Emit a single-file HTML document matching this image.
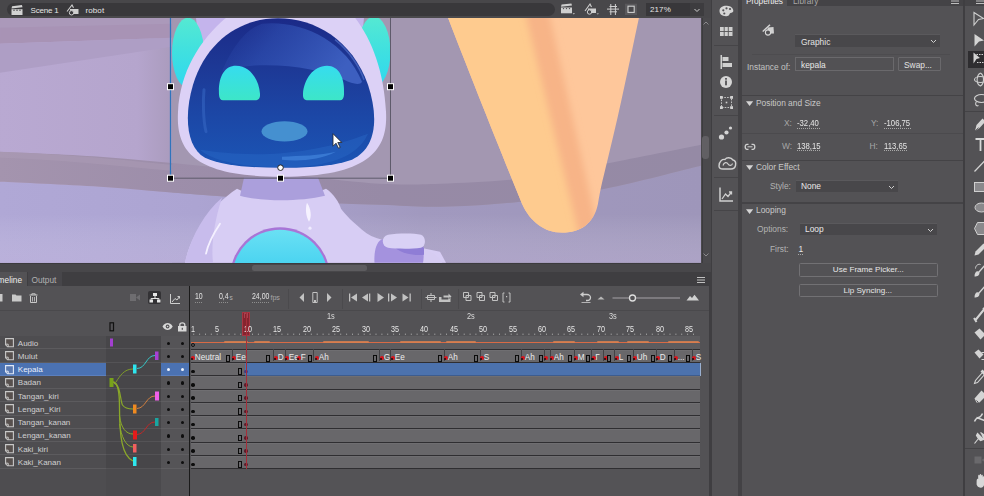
<!DOCTYPE html>
<html><head><meta charset="utf-8">
<style>
*{margin:0;padding:0;box-sizing:border-box}
html,body{width:984px;height:496px;overflow:hidden;background:#535255;font-family:"Liberation Sans",sans-serif;color:#d8d8d8}
.a{position:absolute}
.t{position:absolute;white-space:nowrap;font-size:8px;line-height:10px}
.n{transform-origin:0 0;display:inline-block}
svg{position:absolute;overflow:visible}
</style></head><body>
<div class="a" style="left:0px;top:0px;width:711px;height:18px;background:#48474a;"></div><div class="a" style="left:0px;top:16px;width:701px;height:2.3px;background:#4a494c;"></div><div class="a" style="left:7px;top:3px;width:548px;height:13px;background:#39383b;border-radius:6.5px"></div><svg style="left:11px;top:5px" width="13" height="11"><path d="M0.5 4.2 H11.5 V10 H0.5 Z" fill="#d2d2d2"/><path d="M0.5 3.5 L1.1 1.3 L10.9 0.1 L11.5 2.3 Z" fill="#d2d2d2"/><circle cx="3" cy="5.3" r="0.7" fill="#39383b"/><circle cx="6" cy="5.3" r="0.7" fill="#39383b"/><circle cx="9" cy="5.3" r="0.7" fill="#39383b"/></svg><div class="t" style="left:30.5px;top:5.53px;font-size:8px;color:#e6e6e6;letter-spacing:-0.2px">Scene 1</div><svg style="left:66px;top:4px" width="14" height="12"><path d="M1 7.5 L6 1 L7.5 3.8" fill="none" stroke="#cfcfcf" stroke-width="1.1"/><path d="M4 5 H12.5 V10 H4 Z" fill="#cfcfcf"/><circle cx="5.5" cy="8.8" r="2.2" fill="#39383b" stroke="#cfcfcf" stroke-width="1"/></svg><div class="t" style="left:85.5px;top:5.53px;font-size:8px;color:#e6e6e6;letter-spacing:0.1px">robot</div><svg style="left:555px;top:0px" width="90" height="18"><path d="M6 7.5 H17 V13.3 H6 Z" fill="#cfcfcf"/><path d="M6 6.8 L6.6 4.6 L16.4 3.4 L17 5.6 Z" fill="#cfcfcf"/><circle cx="8.5" cy="8.6" r="0.7" fill="#48474a"/><circle cx="11.5" cy="8.6" r="0.7" fill="#48474a"/><circle cx="14.5" cy="8.6" r="0.7" fill="#48474a"/><path d="M17.6 13.2 H20 L18.8 14.4 Z" fill="#cfcfcf"/><path d="M30 11 L35 4 L36.5 7" fill="none" stroke="#cfcfcf" stroke-width="1.1"/><path d="M33 8.5 H41 V13 H33 Z" fill="#cfcfcf"/><circle cx="34.5" cy="12" r="2.2" fill="#48474a" stroke="#cfcfcf" stroke-width="1"/><path d="M41.5 13.4 H44 L42.75 14.6 Z" fill="#cfcfcf"/><path d="M52 9.1 H64 M55.8 4 V15 M60.4 4 V15 M54.5 6.5 H62 M54.5 11.8 H62" fill="none" stroke="#cfcfcf" stroke-width="1"/><rect x="70" y="3.7" width="12" height="11.3" fill="#59585b"/><rect x="73" y="6.2" width="6.2" height="6.2" fill="#48474a" stroke="#d0d0d0" stroke-width="1.1"/></svg><div class="a" style="left:646px;top:3px;width:44px;height:13px;background:#38373a;"></div><div class="t" style="left:650px;top:5.23px;font-size:8px;color:#e4e4e4;letter-spacing:0.1px">217%</div><div class="a" style="left:690px;top:3px;width:14px;height:13px;background:#3d3c3f;"></div><svg style="left:693px;top:6px" width="10" height="9"><path d="M1.5 3 L4 5.5 L6.5 3" stroke="#cfcfcf" stroke-width="1" fill="none"/></svg><svg style="left:0;top:18.3px;overflow:hidden" width="701" height="244.7" viewBox="0 18.3 701 244.7">
<defs>
  <linearGradient id="bgL" x1="0" y1="0" x2="1" y2="0">
    <stop offset="0" stop-color="#b9a9d2"/><stop offset="0.8" stop-color="#b5a5cd"/><stop offset="1" stop-color="#aa9bbd"/>
  </linearGradient>
  <linearGradient id="bgLow" x1="0" y1="0" x2="0" y2="1">
    <stop offset="0" stop-color="#ada5d6"/><stop offset="0.45" stop-color="#b1a7d4"/><stop offset="1" stop-color="#b7a9d2"/>
  </linearGradient>
  <linearGradient id="bgRLow" x1="0" y1="0" x2="0" y2="1">
    <stop offset="0" stop-color="#9d95bb"/><stop offset="1" stop-color="#a398b8"/>
  </linearGradient>
  <linearGradient id="visor" x1="0" y1="0" x2="0" y2="1">
    <stop offset="0" stop-color="#1b2a88"/><stop offset="0.3" stop-color="#1d3794"/><stop offset="0.65" stop-color="#1c47a6"/><stop offset="1" stop-color="#1b55b5"/>
  </linearGradient>
  <linearGradient id="eye" x1="0" y1="0" x2="0" y2="1">
    <stop offset="0" stop-color="#36dcef"/><stop offset="1" stop-color="#3de6c8"/>
  </linearGradient>
  <linearGradient id="chest" x1="0" y1="0" x2="0" y2="1">
    <stop offset="0" stop-color="#6ae0f4"/><stop offset="0.5" stop-color="#3fcfef"/><stop offset="1" stop-color="#2fc6ea"/>
  </linearGradient>
  <linearGradient id="ear" x1="0" y1="0" x2="0" y2="1">
    <stop offset="0" stop-color="#55e9d2"/><stop offset="0.5" stop-color="#3fe0e0"/><stop offset="1" stop-color="#2fd8f0"/>
  </linearGradient>
  <filter id="blur3" x="-50%" y="-10%" width="200%" height="120%"><feGaussianBlur stdDeviation="3.5"/></filter>
  <clipPath id="coneclip"><path d="M448 18 L639 18 C630 60 620 110 610 150 C604 175 600 190 598 204 C594 224 580 233 562 233 C545 233 530 222 522 204 C500 150 470 75 448 18 Z"/></clipPath>
</defs>
<rect x="0" y="18" width="701" height="245" fill="#a397b1"/>
<rect x="0" y="18" width="172" height="245" fill="url(#bgL)"/>
<path d="M0 18 H172 V38 L0 44 Z" fill="#a893b5"/>
<path d="M0 18 H172 V24 L0 28 Z" fill="#ab99ba"/>
<path d="M0 44 L172 38 L172 47 L0 73 Z" fill="#ae9ec5"/>
<linearGradient id="lowH" gradientUnits="userSpaceOnUse" x1="0" y1="0" x2="701" y2="0"><stop offset="0" stop-color="#b0a8d6"/><stop offset="0.28" stop-color="#aca4d2"/><stop offset="0.6" stop-color="#a199bf"/><stop offset="1" stop-color="#9e96ba"/></linearGradient>
<linearGradient id="lowV" x1="0" y1="0" x2="0" y2="1"><stop offset="0" stop-color="#ffffff" stop-opacity="0"/><stop offset="0.5" stop-color="#ffffff" stop-opacity="0"/><stop offset="1" stop-color="#d8c8e8" stop-opacity="0.25"/></linearGradient>
<path d="M0.0 182.0 C16.7 182.8 66.7 184.8 100.0 187.0 C133.3 189.2 166.7 192.5 200.0 195.0 C233.3 197.5 270.0 200.3 300.0 202.0 C330.0 203.7 356.7 204.2 380.0 205.0 C403.3 205.8 416.7 207.5 440.0 207.0 C463.3 206.5 492.5 205.0 520.0 202.0 C547.5 199.0 574.8 195.0 605.0 189.0 C635.2 183.0 685.0 169.8 701.0 166.0  V263 H0 Z" fill="url(#lowH)"/>
<path d="M0.0 182.0 C16.7 182.8 66.7 184.8 100.0 187.0 C133.3 189.2 166.7 192.5 200.0 195.0 C233.3 197.5 270.0 200.3 300.0 202.0 C330.0 203.7 356.7 204.2 380.0 205.0 C403.3 205.8 416.7 207.5 440.0 207.0 C463.3 206.5 492.5 205.0 520.0 202.0 C547.5 199.0 574.8 195.0 605.0 189.0 C635.2 183.0 685.0 169.8 701.0 166.0  V263 H0 Z" fill="url(#lowV)"/>
<linearGradient id="bandG" gradientUnits="userSpaceOnUse" x1="0" y1="0" x2="701" y2="0"><stop offset="0" stop-color="#a494ae"/><stop offset="0.24" stop-color="#9d8eaa"/><stop offset="0.55" stop-color="#978aa6"/><stop offset="1" stop-color="#958aa5"/></linearGradient>
<path d="M0.0 152.0 C16.7 152.8 66.7 154.7 100.0 157.0 C133.3 159.3 166.7 162.8 200.0 166.0 C233.3 169.2 270.0 173.0 300.0 176.0 C330.0 179.0 356.7 182.7 380.0 184.0 C403.3 185.3 416.7 184.8 440.0 184.0 C463.3 183.2 492.5 182.3 520.0 179.0 C547.5 175.7 574.8 169.7 605.0 164.0 C635.2 158.3 685.0 148.2 701.0 145.0 L701 166 C685.0 169.8 635.2 183.0 605.0 189.0 C574.8 195.0 547.5 199.0 520.0 202.0 C492.5 205.0 463.3 206.5 440.0 207.0 C416.7 207.5 403.3 205.8 380.0 205.0 C356.7 204.2 330.0 203.7 300.0 202.0 C270.0 200.3 233.3 197.5 200.0 195.0 C166.7 192.5 133.3 189.2 100.0 187.0 C66.7 184.8 16.7 182.8 0.0 182.0 Z" fill="url(#bandG)"/>
<path d="M0 152 C80 155 140 162 172 165 V171 C120 167 80 161 0 158 Z" fill="#ab9bb6" opacity="0.5"/>
<g clip-path="url(#coneclip)">
<rect x="440" y="18" width="210" height="220" fill="#fec79b"/>
<path d="M440 0 H534 L590 240 H440 Z" fill="#fecb8f" filter="url(#blur3)"/>
<path d="M522 0 H546 L600 240 H580 Z" fill="#f7b487" filter="url(#blur3)"/>
</g>
<!-- ear holders -->
<path d="M196 18 L226 18 C218 30 212 40 206 52 L198 40 Z" fill="#c4b4ec"/>
<path d="M334 18 L364 18 L362 40 L356 52 C350 40 344 30 334 18 Z" fill="#c4b4ec"/>
<!-- ears -->
<ellipse cx="188" cy="53" rx="16" ry="35" fill="url(#ear)"/>
<ellipse cx="374" cy="52" rx="16.5" ry="35" fill="url(#ear)"/>
<!-- head outer -->
<path d="M226 18 L355 18 C372 40 384 72 386 112 C388 148 372 177 282 177 C192 177 176 150 178 112 C180 72 200 40 226 18 Z" fill="#dcd1f6"/>
<!-- visor -->
<path d="M278 18.5 C315 18.5 352 40 368 85 C378 115 378 148 352 160 C328 168 300 168 280 168 C250 168 222 166 205 158 C186 148 184 115 193 85 C206 42 240 18.5 278 18.5 Z" fill="url(#visor)"/>
<!-- visor reflection -->
<linearGradient id="refl" x1="0" y1="0" x2="1" y2="0.3"><stop offset="0" stop-color="#2a44a8" stop-opacity="0"/><stop offset="0.4" stop-color="#3050b2" stop-opacity="0.6"/><stop offset="1" stop-color="#3d5fc0" stop-opacity="1"/></linearGradient>
<path d="M262 24 C300 20 345 40 362 82 C360 86 352 84 344 80 C320 70 290 64 252 66 C238 67 228 70 222 72 C230 52 244 30 262 24 Z" fill="url(#refl)"/>
<path d="M335 40 C350 52 360 68 364 80" stroke="#5a7ad0" stroke-width="1.5" fill="none" opacity="0.6"/>
<path d="M204 90 C203 100 203 120 206 132" stroke="#3a6cc8" stroke-width="3" opacity="0.5" fill="none" stroke-linecap="round"/>
<path d="M200 150 C240 156 300 160 368 134 C360 152 340 164 300 167 C250 169 215 163 200 150 Z" fill="#2b68c6" opacity="0.45"/>
<path d="M282 157 C300 156 320 156 336 152 C320 160 300 162 282 160 Z" fill="#3f80d8" opacity="0.8"/>
<!-- eyes -->
<path d="M219 95 C218 78 224 66 236 66 C250 66 259 80 260 94 C260.3 99 258.5 100.5 255 100.5 H223 C220.5 100.5 219.2 98.5 219 95 Z" fill="url(#eye)"/>
<path d="M344 95 C345 78 339 66 327 66 C313 66 304 80 303 94 C302.7 99 304.5 100.5 308 100.5 H340 C342.5 100.5 343.8 98.5 344 95 Z" fill="url(#eye)"/>
<!-- nose -->
<ellipse cx="284.5" cy="131.7" rx="23" ry="10.2" fill="#4590d0"/>
<!-- body -->
<path d="M237 189 C255 199 305 199 326 189 C334 194 339 203 341 209 C346 216 353 222 362 230 C368 235 374 238 382 240 L440 252 L446 263 H185 C190 238 208 208 237 189 Z" fill="#d7cdf4"/>
<path d="M185 263 C190 240 203 214 222 198 C214 222 211 246 213 263 Z" fill="#c8bcec"/>
<!-- neck -->
<path d="M244 178 H318 L325 196 C300 202 262 202 240 196 Z" fill="#ab9fdc"/>
<!-- highlights -->
<path d="M307 203 C311 209 312 217 309 222 C306 217 305 209 307 203 Z" fill="#f6f2ff"/>
<circle cx="310" cy="228.5" r="1.6" fill="#f0ecff"/>
<path d="M220 224 C214 233 208 244 206 254" stroke="#f4f0ff" stroke-width="1.8" fill="none" stroke-linecap="round"/>
<!-- chest -->
<ellipse cx="280" cy="276" rx="49.5" ry="48.5" fill="#a875d6"/>
<ellipse cx="280" cy="277" rx="47.5" ry="47" fill="url(#chest)"/>
<!-- hand -->
<path d="M418 247 C428 250 436 254 442 262 L442 263 H418 Z" fill="#d6ccf2"/>
<path d="M381 240 C390 238 410 238 422 240 C424 248 424 258 423 263 H374.5 C374 255 375 244 381 240 Z" fill="#a492de"/>
<path d="M395 248 C405 246 418 246 424 248 V255 C414 256 402 254 395 248 Z" fill="#8f7dd6"/>
<path d="M388 235 C398 233.5 414 233.5 421 235 C426 237 426.5 246 421 248 C410 249.5 396 249 388 248 C381 246 381 237 388 235 Z" fill="#d9d1f5"/>
<!-- selection box -->
<path d="M170.5 18 V178.5 H390.5 V18" stroke="#5d5a6a" stroke-width="1" fill="none"/>
<path d="M170.5 18 V178.5" stroke="#2f74bb" stroke-width="1.3" fill="none"/>
<g fill="#000" stroke="#fff" stroke-width="1">
<rect x="167.5" y="84" width="6" height="6"/><rect x="387.5" y="84" width="6" height="6"/>
<rect x="167.5" y="175.5" width="6" height="6"/><rect x="277.5" y="175.5" width="6" height="6"/><rect x="387.5" y="175.5" width="6" height="6"/>
</g>
<circle cx="280.5" cy="168" r="2.8" fill="#fff" stroke="#222" stroke-width="1"/>
<!-- cursor -->
<path d="M333 134 L333 146.5 L336 143.5 L338.5 148.5 L340.2 147.7 L337.8 142.8 L341.8 142.8 Z" fill="#fff" stroke="#222" stroke-width="0.8"/>
</svg><div class="a" style="left:701px;top:18px;width:10px;height:245px;background:#4a494c;"></div><div class="a" style="left:702px;top:18px;width:1px;height:245px;background:#3c3b3e;"></div><svg style="left:702px;top:20px" width="8" height="6"><path d="M1.5 4.5 L4 2 L6.5 4.5" stroke="#8a898c" stroke-width="1" fill="none"/></svg><div class="a" style="left:702px;top:136px;width:7px;height:22.5px;background:#615f63;border-radius:3px"></div><svg style="left:702px;top:252px" width="8" height="6"><path d="M1.5 1.5 L4 4 L6.5 1.5" stroke="#8a898c" stroke-width="1" fill="none"/></svg><div class="a" style="left:0px;top:263px;width:711px;height:9px;background:#48474a;"></div><div class="a" style="left:0px;top:263px;width:701px;height:1px;background:#3c3b3e;"></div><div class="a" style="left:251.5px;top:265px;width:115px;height:5.8px;background:#5d5c5f;border-radius:2.5px"></div><div class="a" style="left:0px;top:272px;width:711px;height:14px;background:#3f3e41;"></div><div class="a" style="left:0px;top:272px;width:27px;height:14px;background:#535255;"></div><div class="a" style="left:27.5px;top:272px;width:34px;height:14px;background:#47464a;"></div><div class="t" style="left:-9px;top:275.12px;font-size:8.3px;color:#eeeeee;">Timeline</div><div class="t" style="left:31.5px;top:275.12px;font-size:8.3px;color:#b0b0b0;">Output</div><svg style="left:697px;top:277px" width="9" height="7"><path d="M0 0.5H8M0 3H8M0 5.5H8" stroke="#c0c0c0" stroke-width="1"/></svg><div class="a" style="left:0px;top:286px;width:709px;height:210px;background:#535255;"></div><div class="a" style="left:709px;top:272px;width:3px;height:224px;background:#3f3e41;"></div><div class="a" style="left:0px;top:310px;width:709px;height:1px;background:#4a494c;"></div><svg style="left:0;top:292px" width="40" height="12"><rect x="-2" y="2" width="4.5" height="7.5" fill="#c9c9c9"/><path d="M12 2.5 H15.5 L16.5 3.5 H21.5 V9.5 H12 Z" fill="#c9c9c9"/><path d="M29.5 3 H37.5 M31.8 3 V1.8 H35.2 V3" stroke="#c9c9c9" stroke-width="1" fill="none"/><path d="M30.5 4 V10.5 H36.5 V4" stroke="#c9c9c9" stroke-width="1" fill="none"/><path d="M32.5 5 V9.5 M34.5 5 V9.5" stroke="#c9c9c9" stroke-width="0.8"/></svg><svg style="left:129px;top:293px" width="12" height="9"><rect x="1" y="1" width="6" height="7" fill="#6e6d70"/><path d="M7 4.5 L11 1.5 V7.5 Z" fill="#6e6d70"/></svg><div class="a" style="left:148px;top:291px;width:13px;height:13px;background:#333235;border-radius:2px"></div><svg style="left:148.5px;top:292px" width="12" height="11"><rect x="4" y="1" width="4" height="3" fill="#e6e6e6"/><path d="M6 4 V6 M2.25 6.5 H9.75 M2.25 6 V7.5 M9.75 6 V7.5" stroke="#e6e6e6" stroke-width="1"/><rect x="0.5" y="7.5" width="3.5" height="3" fill="#e6e6e6"/><rect x="8" y="7.5" width="3.5" height="3" fill="#e6e6e6"/></svg><svg style="left:169px;top:293px" width="12" height="12"><path d="M1.5 1 V10.5 H11" stroke="#cfcfcf" stroke-width="1" fill="none"/><path d="M3 9 L6 5.5 L8 7 L10.5 3.5 M8.5 3.5 H10.5 V5.5" stroke="#cfcfcf" stroke-width="1" fill="none"/></svg><div class="a" style="left:189.2px;top:286px;width:1.3px;height:210px;background:#1a1a1a;"></div><div class="t" style="left:195px;top:292.36px;font-size:8.2px;color:#e2e2e2;transform:scaleX(0.85);transform-origin:0 0">10</div><div class="a" style="left:195px;top:302px;width:7px;height:1px;background:repeating-linear-gradient(90deg,#8e8e8e 0 1px,transparent 1px 2px)"></div><div class="t" style="left:219px;top:292.36px;font-size:8.2px;color:#e2e2e2;transform:scaleX(0.85);transform-origin:0 0">0,4</div><div class="t" style="left:229.5px;top:292.95px;font-size:6.5px;color:#b0b0b0;">s</div><div class="a" style="left:219px;top:302px;width:10px;height:1px;background:repeating-linear-gradient(90deg,#8e8e8e 0 1px,transparent 1px 2px)"></div><div class="t" style="left:251.5px;top:292.36px;font-size:8.2px;color:#e2e2e2;transform:scaleX(0.85);transform-origin:0 0">24,00</div><div class="t" style="left:270.5px;top:292.71px;font-size:7.2px;color:#a6a6a6;letter-spacing:-0.1px">fps</div><div class="a" style="left:252px;top:302px;width:17px;height:1px;background:repeating-linear-gradient(90deg,#8e8e8e 0 1px,transparent 1px 2px)"></div><div class="a" style="left:288px;top:289px;width:1px;height:20px;background:#4b4a4d;"></div><div class="a" style="left:342px;top:289px;width:1px;height:20px;background:#4b4a4d;"></div><div class="a" style="left:421px;top:289px;width:1px;height:20px;background:#4b4a4d;"></div><div class="a" style="left:457.5px;top:289px;width:1px;height:20px;background:#4b4a4d;"></div><svg style="left:295px;top:290px" width="220" height="16"><path d="M9 3 L4.5 7.5 L9 12 Z" fill="#c2c2c2"/><path d="M17.8 2.5 H22.2 V12.5 H17.8 Z" fill="none" stroke="#c2c2c2" stroke-width="1"/><path d="M19 10 H21 V12 H19 Z" fill="#c2c2c2"/><path d="M32 3 L36.5 7.5 L32 12 Z" fill="#c2c2c2"/><path d="M54 3.5 H55.3 V11.5 H54 Z M62 3.5 L56 7.5 L62 11.5 Z" fill="#c2c2c2"/><path d="M74 3.5 H75.3 V11.5 H74 Z M73 3.5 L67 7.5 L73 11.5 Z" fill="#c2c2c2"/><path d="M82.5 3 L89 7.5 L82.5 12 Z" fill="#c2c2c2"/><path d="M93 3.5 H94.3 V11.5 H93 Z M96 3.5 L102 7.5 L96 11.5 Z" fill="#c2c2c2"/><path d="M114.5 3.5 H115.8 V11.5 H114.5 Z M107.5 3.5 L113.5 7.5 L107.5 11.5 Z" fill="#c2c2c2"/><path d="M130.5 7.5 H141.5 M136 3 V5.5 M136 9.5 V12 M132.5 5.5 H139.5 V9.5 H132.5 Z" fill="none" stroke="#c2c2c2" stroke-width="1"/><path d="M144 7 V12 H155.5 V7.5 H153 V9.5 H146.5 V7 Z M148.5 5.5 H153.5 V3.5 L156.5 6.5 L153.5 9.5 V7.5 H148.5 Z" fill="#c2c2c2"/><path d="M168.5 2.5 h5 v5 h-5 Z M171.0 5.5 h5 v5 h-5 Z" fill="none" stroke="#c2c2c2" stroke-width="1"/><path d="M182 2.5 h5 v5 h-5 Z M184.5 5.5 h5 v5 h-5 Z" fill="none" stroke="#c2c2c2" stroke-width="1"/><path d="M195 2.5 h5 v5 h-5 Z M197.5 5.5 h5 v5 h-5 Z" fill="none" stroke="#c2c2c2" stroke-width="1"/><path d="M208 3 v9 M208 3 h1.5 M208 12 h1.5 M215 3 v9 M215 3 h-1.5 M215 12 h-1.5" fill="none" stroke="#c2c2c2" stroke-width="1"/><path d="M211 6 h1.2 v1.2 h-1.2 Z" fill="#c2c2c2"/></svg><svg style="left:578px;top:290px" width="125" height="14"><path d="M4.5 4.5 H9 C11 4.5 12.5 6 12.5 7.5 C12.5 9.5 11 10.5 9 10.5 H8" fill="none" stroke="#cdcdcd" stroke-width="1.3"/><path d="M2 4.5 L5.5 1.8 V7.2 Z" fill="#cdcdcd"/><path d="M3.5 12.5 H12.5" stroke="#cdcdcd" stroke-width="0.8"/><path d="M19.5 9.5 L23 6.5 L26.5 9.5 Z" fill="#b8b8b8"/><path d="M34.5 8 H102" stroke="#8a898c" stroke-width="1.3"/><circle cx="54.5" cy="8" r="3" fill="#535255" stroke="#dedede" stroke-width="1.3"/><path d="M108.5 10.5 L112 6 L114 8 L116.5 4.8 L121 10.5 Z" fill="#d0d0d0"/></svg><svg style="left:108px;top:321px" width="80" height="12"><rect x="2" y="1.8" width="3.5" height="8" fill="none" stroke="#111" stroke-width="1.2"/><path d="M54.5 5.5 C56 2.8 58 2 59.6 2 C61.2 2 63.2 2.8 64.7 5.5 C63.2 8.2 61.2 9 59.6 9 C58 9 56 8.2 54.5 5.5 Z" fill="#d8d8d8"/><circle cx="59.6" cy="5.5" r="1.9" fill="#535255"/><circle cx="59.6" cy="5.5" r="0.8" fill="#d8d8d8"/><path d="M71.8 5 V3.8 C71.8 1.3 76.8 1.3 76.8 3.8 V5" fill="none" stroke="#d8d8d8" stroke-width="1.3"/><rect x="70" y="5" width="8.5" height="5.5" fill="#d8d8d8"/><rect x="73.7" y="6.8" width="1.2" height="2" fill="#535255"/></svg><div class="a" style="left:241.8px;top:312px;width:8.2px;height:24px;background:#86242f;border:1px solid #a83542"></div><div class="a" style="left:244.2px;top:313px;width:3.4px;height:5px;background:transparent;border:1px solid #a84250;border-bottom:none"></div><div class="t" style="left:191.0px;top:324.29px;font-size:8.4px;color:#e6e6e6;transform:scaleX(0.86);transform-origin:0 0">1</div><div class="t" style="left:214.52px;top:324.29px;font-size:8.4px;color:#e6e6e6;transform:scaleX(0.86);transform-origin:0 0">5</div><div class="t" style="left:243.92px;top:324.29px;font-size:8.4px;color:#e6e6e6;transform:scaleX(0.86);transform-origin:0 0">10</div><div class="t" style="left:273.32px;top:324.29px;font-size:8.4px;color:#e6e6e6;transform:scaleX(0.86);transform-origin:0 0">15</div><div class="t" style="left:302.72px;top:324.29px;font-size:8.4px;color:#e6e6e6;transform:scaleX(0.86);transform-origin:0 0">20</div><div class="t" style="left:332.12px;top:324.29px;font-size:8.4px;color:#e6e6e6;transform:scaleX(0.86);transform-origin:0 0">25</div><div class="t" style="left:361.52px;top:324.29px;font-size:8.4px;color:#e6e6e6;transform:scaleX(0.86);transform-origin:0 0">30</div><div class="t" style="left:390.92px;top:324.29px;font-size:8.4px;color:#e6e6e6;transform:scaleX(0.86);transform-origin:0 0">35</div><div class="t" style="left:420.32px;top:324.29px;font-size:8.4px;color:#e6e6e6;transform:scaleX(0.86);transform-origin:0 0">40</div><div class="t" style="left:449.72px;top:324.29px;font-size:8.4px;color:#e6e6e6;transform:scaleX(0.86);transform-origin:0 0">45</div><div class="t" style="left:479.12px;top:324.29px;font-size:8.4px;color:#e6e6e6;transform:scaleX(0.86);transform-origin:0 0">50</div><div class="t" style="left:508.52px;top:324.29px;font-size:8.4px;color:#e6e6e6;transform:scaleX(0.86);transform-origin:0 0">55</div><div class="t" style="left:537.92px;top:324.29px;font-size:8.4px;color:#e6e6e6;transform:scaleX(0.86);transform-origin:0 0">60</div><div class="t" style="left:567.32px;top:324.29px;font-size:8.4px;color:#e6e6e6;transform:scaleX(0.86);transform-origin:0 0">65</div><div class="t" style="left:596.72px;top:324.29px;font-size:8.4px;color:#e6e6e6;transform:scaleX(0.86);transform-origin:0 0">70</div><div class="t" style="left:626.12px;top:324.29px;font-size:8.4px;color:#e6e6e6;transform:scaleX(0.86);transform-origin:0 0">75</div><div class="t" style="left:655.52px;top:324.29px;font-size:8.4px;color:#e6e6e6;transform:scaleX(0.86);transform-origin:0 0">80</div><div class="t" style="left:684.92px;top:324.29px;font-size:8.4px;color:#e6e6e6;transform:scaleX(0.86);transform-origin:0 0">85</div><div class="t" style="left:326.5px;top:312.46px;font-size:8.2px;color:#dcdcdc;transform:scaleX(0.9);transform-origin:0 0">1s</div><div class="t" style="left:467px;top:312.46px;font-size:8.2px;color:#dcdcdc;transform:scaleX(0.9);transform-origin:0 0">2s</div><div class="t" style="left:608.5px;top:312.46px;font-size:8.2px;color:#dcdcdc;transform:scaleX(0.9);transform-origin:0 0">3s</div><svg style="left:190px;top:333px" width="512" height="3"><rect x="3.2" y="0.6" width="1" height="1.3" fill="#a0a0a0"/><rect x="9.1" y="0.6" width="1" height="1.3" fill="#a0a0a0"/><rect x="15.0" y="0.6" width="1" height="1.3" fill="#a0a0a0"/><rect x="20.8" y="0.6" width="1" height="1.3" fill="#a0a0a0"/><rect x="26.7" y="0.6" width="1" height="1.3" fill="#a0a0a0"/><rect x="32.6" y="0.6" width="1" height="1.3" fill="#a0a0a0"/><rect x="38.5" y="0.6" width="1" height="1.3" fill="#a0a0a0"/><rect x="44.4" y="0.6" width="1" height="1.3" fill="#a0a0a0"/><rect x="50.2" y="0.6" width="1" height="1.3" fill="#a0a0a0"/><rect x="56.1" y="0.6" width="1" height="1.3" fill="#a0a0a0"/><rect x="62.0" y="0.6" width="1" height="1.3" fill="#a0a0a0"/><rect x="67.9" y="0.6" width="1" height="1.3" fill="#a0a0a0"/><rect x="73.8" y="0.6" width="1" height="1.3" fill="#a0a0a0"/><rect x="79.6" y="0.6" width="1" height="1.3" fill="#a0a0a0"/><rect x="85.5" y="0.6" width="1" height="1.3" fill="#a0a0a0"/><rect x="91.4" y="0.6" width="1" height="1.3" fill="#a0a0a0"/><rect x="97.3" y="0.6" width="1" height="1.3" fill="#a0a0a0"/><rect x="103.2" y="0.6" width="1" height="1.3" fill="#a0a0a0"/><rect x="109.0" y="0.6" width="1" height="1.3" fill="#a0a0a0"/><rect x="114.9" y="0.6" width="1" height="1.3" fill="#a0a0a0"/><rect x="120.8" y="0.6" width="1" height="1.3" fill="#a0a0a0"/><rect x="126.7" y="0.6" width="1" height="1.3" fill="#a0a0a0"/><rect x="132.6" y="0.6" width="1" height="1.3" fill="#a0a0a0"/><rect x="138.4" y="0.6" width="1" height="1.3" fill="#a0a0a0"/><rect x="144.3" y="0.6" width="1" height="1.3" fill="#a0a0a0"/><rect x="150.2" y="0.6" width="1" height="1.3" fill="#a0a0a0"/><rect x="156.1" y="0.6" width="1" height="1.3" fill="#a0a0a0"/><rect x="162.0" y="0.6" width="1" height="1.3" fill="#a0a0a0"/><rect x="167.8" y="0.6" width="1" height="1.3" fill="#a0a0a0"/><rect x="173.7" y="0.6" width="1" height="1.3" fill="#a0a0a0"/><rect x="179.6" y="0.6" width="1" height="1.3" fill="#a0a0a0"/><rect x="185.5" y="0.6" width="1" height="1.3" fill="#a0a0a0"/><rect x="191.4" y="0.6" width="1" height="1.3" fill="#a0a0a0"/><rect x="197.2" y="0.6" width="1" height="1.3" fill="#a0a0a0"/><rect x="203.1" y="0.6" width="1" height="1.3" fill="#a0a0a0"/><rect x="209.0" y="0.6" width="1" height="1.3" fill="#a0a0a0"/><rect x="214.9" y="0.6" width="1" height="1.3" fill="#a0a0a0"/><rect x="220.8" y="0.6" width="1" height="1.3" fill="#a0a0a0"/><rect x="226.6" y="0.6" width="1" height="1.3" fill="#a0a0a0"/><rect x="232.5" y="0.6" width="1" height="1.3" fill="#a0a0a0"/><rect x="238.4" y="0.6" width="1" height="1.3" fill="#a0a0a0"/><rect x="244.3" y="0.6" width="1" height="1.3" fill="#a0a0a0"/><rect x="250.2" y="0.6" width="1" height="1.3" fill="#a0a0a0"/><rect x="256.0" y="0.6" width="1" height="1.3" fill="#a0a0a0"/><rect x="261.9" y="0.6" width="1" height="1.3" fill="#a0a0a0"/><rect x="267.8" y="0.6" width="1" height="1.3" fill="#a0a0a0"/><rect x="273.7" y="0.6" width="1" height="1.3" fill="#a0a0a0"/><rect x="279.6" y="0.6" width="1" height="1.3" fill="#a0a0a0"/><rect x="285.4" y="0.6" width="1" height="1.3" fill="#a0a0a0"/><rect x="291.3" y="0.6" width="1" height="1.3" fill="#a0a0a0"/><rect x="297.2" y="0.6" width="1" height="1.3" fill="#a0a0a0"/><rect x="303.1" y="0.6" width="1" height="1.3" fill="#a0a0a0"/><rect x="309.0" y="0.6" width="1" height="1.3" fill="#a0a0a0"/><rect x="314.8" y="0.6" width="1" height="1.3" fill="#a0a0a0"/><rect x="320.7" y="0.6" width="1" height="1.3" fill="#a0a0a0"/><rect x="326.6" y="0.6" width="1" height="1.3" fill="#a0a0a0"/><rect x="332.5" y="0.6" width="1" height="1.3" fill="#a0a0a0"/><rect x="338.4" y="0.6" width="1" height="1.3" fill="#a0a0a0"/><rect x="344.2" y="0.6" width="1" height="1.3" fill="#a0a0a0"/><rect x="350.1" y="0.6" width="1" height="1.3" fill="#a0a0a0"/><rect x="356.0" y="0.6" width="1" height="1.3" fill="#a0a0a0"/><rect x="361.9" y="0.6" width="1" height="1.3" fill="#a0a0a0"/><rect x="367.8" y="0.6" width="1" height="1.3" fill="#a0a0a0"/><rect x="373.6" y="0.6" width="1" height="1.3" fill="#a0a0a0"/><rect x="379.5" y="0.6" width="1" height="1.3" fill="#a0a0a0"/><rect x="385.4" y="0.6" width="1" height="1.3" fill="#a0a0a0"/><rect x="391.3" y="0.6" width="1" height="1.3" fill="#a0a0a0"/><rect x="397.2" y="0.6" width="1" height="1.3" fill="#a0a0a0"/><rect x="403.0" y="0.6" width="1" height="1.3" fill="#a0a0a0"/><rect x="408.9" y="0.6" width="1" height="1.3" fill="#a0a0a0"/><rect x="414.8" y="0.6" width="1" height="1.3" fill="#a0a0a0"/><rect x="420.7" y="0.6" width="1" height="1.3" fill="#a0a0a0"/><rect x="426.6" y="0.6" width="1" height="1.3" fill="#a0a0a0"/><rect x="432.4" y="0.6" width="1" height="1.3" fill="#a0a0a0"/><rect x="438.3" y="0.6" width="1" height="1.3" fill="#a0a0a0"/><rect x="444.2" y="0.6" width="1" height="1.3" fill="#a0a0a0"/><rect x="450.1" y="0.6" width="1" height="1.3" fill="#a0a0a0"/><rect x="456.0" y="0.6" width="1" height="1.3" fill="#a0a0a0"/><rect x="461.8" y="0.6" width="1" height="1.3" fill="#a0a0a0"/><rect x="467.7" y="0.6" width="1" height="1.3" fill="#a0a0a0"/><rect x="473.6" y="0.6" width="1" height="1.3" fill="#a0a0a0"/><rect x="479.5" y="0.6" width="1" height="1.3" fill="#a0a0a0"/><rect x="485.4" y="0.6" width="1" height="1.3" fill="#a0a0a0"/><rect x="491.2" y="0.6" width="1" height="1.3" fill="#a0a0a0"/><rect x="497.1" y="0.6" width="1" height="1.3" fill="#a0a0a0"/><rect x="503.0" y="0.6" width="1" height="1.3" fill="#a0a0a0"/></svg><div class="a" style="left:0px;top:336.0px;width:106px;height:13.25px;background:#4e4d50;"></div><div class="a" style="left:0px;top:348.25px;width:106px;height:1px;background:#5c5b5e;"></div><div class="a" style="left:106px;top:336.0px;width:55px;height:13.25px;background:#474649;"></div><div class="a" style="left:106px;top:348.25px;width:55px;height:1px;background:#545356;"></div><div class="a" style="left:161px;top:336.0px;width:28px;height:13.25px;background:#555457;"></div><div class="a" style="left:161px;top:348.25px;width:28px;height:1px;background:#5f5e61;"></div><div class="a" style="left:166.8px;top:341.6px;width:3.2px;height:3.2px;border-radius:50%;background:#0e0e0e"></div><div class="a" style="left:180.8px;top:341.6px;width:3.2px;height:3.2px;border-radius:50%;background:#0e0e0e"></div><svg style="left:5px;top:338.0px" width="10" height="10"><path d="M0.6 0.6 H8.4 V8.8 H2.6 L0.6 6.8 Z" fill="#57504e" stroke="#c8c8c8" stroke-width="1.1"/><path d="M0.6 6.2 H3.2 V8.8" fill="none" stroke="#c8c8c8" stroke-width="1"/></svg><div class="t" style="left:17.8px;top:338.63px;font-size:8px;color:#d0d0d0;">Audio</div><div class="a" style="left:0px;top:349.25px;width:106px;height:13.25px;background:#4e4d50;"></div><div class="a" style="left:0px;top:361.5px;width:106px;height:1px;background:#5c5b5e;"></div><div class="a" style="left:106px;top:349.25px;width:55px;height:13.25px;background:#474649;"></div><div class="a" style="left:106px;top:361.5px;width:55px;height:1px;background:#545356;"></div><div class="a" style="left:161px;top:349.25px;width:28px;height:13.25px;background:#555457;"></div><div class="a" style="left:161px;top:361.5px;width:28px;height:1px;background:#5f5e61;"></div><div class="a" style="left:166.8px;top:354.9px;width:3.2px;height:3.2px;border-radius:50%;background:#0e0e0e"></div><div class="a" style="left:180.8px;top:354.9px;width:3.2px;height:3.2px;border-radius:50%;background:#0e0e0e"></div><svg style="left:5px;top:351.2px" width="10" height="10"><path d="M0.6 0.6 H8.4 V8.8 H2.6 L0.6 6.8 Z" fill="#57504e" stroke="#c8c8c8" stroke-width="1.1"/><path d="M0.6 6.2 H3.2 V8.8" fill="none" stroke="#c8c8c8" stroke-width="1"/></svg><div class="t" style="left:17.8px;top:351.88px;font-size:8px;color:#d0d0d0;">Mulut</div><div class="a" style="left:0px;top:362.5px;width:106px;height:13.25px;background:#4b72b2;"></div><div class="a" style="left:0px;top:374.75px;width:106px;height:1px;background:#5b7fbd;"></div><div class="a" style="left:106px;top:362.5px;width:55px;height:13.25px;background:#474649;"></div><div class="a" style="left:106px;top:374.75px;width:55px;height:1px;background:#545356;"></div><div class="a" style="left:161px;top:362.5px;width:28px;height:13.25px;background:#4b72b2;"></div><div class="a" style="left:161px;top:374.75px;width:28px;height:1px;background:#5b7fbd;"></div><div class="a" style="left:166.8px;top:368.1px;width:3.2px;height:3.2px;border-radius:50%;background:#eef3fc"></div><div class="a" style="left:180.8px;top:368.1px;width:3.2px;height:3.2px;border-radius:50%;background:#eef3fc"></div><svg style="left:5px;top:364.5px" width="10" height="10"><path d="M0.6 0.6 H8.4 V8.8 H2.6 L0.6 6.8 Z" fill="#5a79b0" stroke="#e2eaf8" stroke-width="1.1"/><path d="M0.6 6.2 H3.2 V8.8" fill="none" stroke="#e2eaf8" stroke-width="1"/></svg><div class="t" style="left:17.8px;top:365.13px;font-size:8px;color:#eaf0fb;">Kepala</div><div class="a" style="left:0px;top:375.75px;width:106px;height:13.25px;background:#4e4d50;"></div><div class="a" style="left:0px;top:388.0px;width:106px;height:1px;background:#5c5b5e;"></div><div class="a" style="left:106px;top:375.75px;width:55px;height:13.25px;background:#474649;"></div><div class="a" style="left:106px;top:388.0px;width:55px;height:1px;background:#545356;"></div><div class="a" style="left:161px;top:375.75px;width:28px;height:13.25px;background:#555457;"></div><div class="a" style="left:161px;top:388.0px;width:28px;height:1px;background:#5f5e61;"></div><div class="a" style="left:166.8px;top:381.4px;width:3.2px;height:3.2px;border-radius:50%;background:#0e0e0e"></div><div class="a" style="left:180.8px;top:381.4px;width:3.2px;height:3.2px;border-radius:50%;background:#0e0e0e"></div><svg style="left:5px;top:377.8px" width="10" height="10"><path d="M0.6 0.6 H8.4 V8.8 H2.6 L0.6 6.8 Z" fill="#57504e" stroke="#c8c8c8" stroke-width="1.1"/><path d="M0.6 6.2 H3.2 V8.8" fill="none" stroke="#c8c8c8" stroke-width="1"/></svg><div class="t" style="left:17.8px;top:378.38px;font-size:8px;color:#d0d0d0;">Badan</div><div class="a" style="left:0px;top:389.0px;width:106px;height:13.25px;background:#4e4d50;"></div><div class="a" style="left:0px;top:401.25px;width:106px;height:1px;background:#5c5b5e;"></div><div class="a" style="left:106px;top:389.0px;width:55px;height:13.25px;background:#474649;"></div><div class="a" style="left:106px;top:401.25px;width:55px;height:1px;background:#545356;"></div><div class="a" style="left:161px;top:389.0px;width:28px;height:13.25px;background:#555457;"></div><div class="a" style="left:161px;top:401.25px;width:28px;height:1px;background:#5f5e61;"></div><div class="a" style="left:166.8px;top:394.6px;width:3.2px;height:3.2px;border-radius:50%;background:#0e0e0e"></div><div class="a" style="left:180.8px;top:394.6px;width:3.2px;height:3.2px;border-radius:50%;background:#0e0e0e"></div><svg style="left:5px;top:391.0px" width="10" height="10"><path d="M0.6 0.6 H8.4 V8.8 H2.6 L0.6 6.8 Z" fill="#57504e" stroke="#c8c8c8" stroke-width="1.1"/><path d="M0.6 6.2 H3.2 V8.8" fill="none" stroke="#c8c8c8" stroke-width="1"/></svg><div class="t" style="left:17.8px;top:391.63px;font-size:8px;color:#d0d0d0;">Tangan_kiri</div><div class="a" style="left:0px;top:402.25px;width:106px;height:13.25px;background:#4e4d50;"></div><div class="a" style="left:0px;top:414.5px;width:106px;height:1px;background:#5c5b5e;"></div><div class="a" style="left:106px;top:402.25px;width:55px;height:13.25px;background:#474649;"></div><div class="a" style="left:106px;top:414.5px;width:55px;height:1px;background:#545356;"></div><div class="a" style="left:161px;top:402.25px;width:28px;height:13.25px;background:#555457;"></div><div class="a" style="left:161px;top:414.5px;width:28px;height:1px;background:#5f5e61;"></div><div class="a" style="left:166.8px;top:407.9px;width:3.2px;height:3.2px;border-radius:50%;background:#0e0e0e"></div><div class="a" style="left:180.8px;top:407.9px;width:3.2px;height:3.2px;border-radius:50%;background:#0e0e0e"></div><svg style="left:5px;top:404.2px" width="10" height="10"><path d="M0.6 0.6 H8.4 V8.8 H2.6 L0.6 6.8 Z" fill="#57504e" stroke="#c8c8c8" stroke-width="1.1"/><path d="M0.6 6.2 H3.2 V8.8" fill="none" stroke="#c8c8c8" stroke-width="1"/></svg><div class="t" style="left:17.8px;top:404.88px;font-size:8px;color:#d0d0d0;">Lengan_Kiri</div><div class="a" style="left:0px;top:415.5px;width:106px;height:13.25px;background:#4e4d50;"></div><div class="a" style="left:0px;top:427.75px;width:106px;height:1px;background:#5c5b5e;"></div><div class="a" style="left:106px;top:415.5px;width:55px;height:13.25px;background:#474649;"></div><div class="a" style="left:106px;top:427.75px;width:55px;height:1px;background:#545356;"></div><div class="a" style="left:161px;top:415.5px;width:28px;height:13.25px;background:#555457;"></div><div class="a" style="left:161px;top:427.75px;width:28px;height:1px;background:#5f5e61;"></div><div class="a" style="left:166.8px;top:421.1px;width:3.2px;height:3.2px;border-radius:50%;background:#0e0e0e"></div><div class="a" style="left:180.8px;top:421.1px;width:3.2px;height:3.2px;border-radius:50%;background:#0e0e0e"></div><svg style="left:5px;top:417.5px" width="10" height="10"><path d="M0.6 0.6 H8.4 V8.8 H2.6 L0.6 6.8 Z" fill="#57504e" stroke="#c8c8c8" stroke-width="1.1"/><path d="M0.6 6.2 H3.2 V8.8" fill="none" stroke="#c8c8c8" stroke-width="1"/></svg><div class="t" style="left:17.8px;top:418.13px;font-size:8px;color:#d0d0d0;">Tangan_kanan</div><div class="a" style="left:0px;top:428.75px;width:106px;height:13.25px;background:#4e4d50;"></div><div class="a" style="left:0px;top:441.0px;width:106px;height:1px;background:#5c5b5e;"></div><div class="a" style="left:106px;top:428.75px;width:55px;height:13.25px;background:#474649;"></div><div class="a" style="left:106px;top:441.0px;width:55px;height:1px;background:#545356;"></div><div class="a" style="left:161px;top:428.75px;width:28px;height:13.25px;background:#555457;"></div><div class="a" style="left:161px;top:441.0px;width:28px;height:1px;background:#5f5e61;"></div><div class="a" style="left:166.8px;top:434.4px;width:3.2px;height:3.2px;border-radius:50%;background:#0e0e0e"></div><div class="a" style="left:180.8px;top:434.4px;width:3.2px;height:3.2px;border-radius:50%;background:#0e0e0e"></div><svg style="left:5px;top:430.8px" width="10" height="10"><path d="M0.6 0.6 H8.4 V8.8 H2.6 L0.6 6.8 Z" fill="#57504e" stroke="#c8c8c8" stroke-width="1.1"/><path d="M0.6 6.2 H3.2 V8.8" fill="none" stroke="#c8c8c8" stroke-width="1"/></svg><div class="t" style="left:17.8px;top:431.38px;font-size:8px;color:#d0d0d0;">Lengan_kanan</div><div class="a" style="left:0px;top:442.0px;width:106px;height:13.25px;background:#4e4d50;"></div><div class="a" style="left:0px;top:454.25px;width:106px;height:1px;background:#5c5b5e;"></div><div class="a" style="left:106px;top:442.0px;width:55px;height:13.25px;background:#474649;"></div><div class="a" style="left:106px;top:454.25px;width:55px;height:1px;background:#545356;"></div><div class="a" style="left:161px;top:442.0px;width:28px;height:13.25px;background:#555457;"></div><div class="a" style="left:161px;top:454.25px;width:28px;height:1px;background:#5f5e61;"></div><div class="a" style="left:166.8px;top:447.6px;width:3.2px;height:3.2px;border-radius:50%;background:#0e0e0e"></div><div class="a" style="left:180.8px;top:447.6px;width:3.2px;height:3.2px;border-radius:50%;background:#0e0e0e"></div><svg style="left:5px;top:444.0px" width="10" height="10"><path d="M0.6 0.6 H8.4 V8.8 H2.6 L0.6 6.8 Z" fill="#57504e" stroke="#c8c8c8" stroke-width="1.1"/><path d="M0.6 6.2 H3.2 V8.8" fill="none" stroke="#c8c8c8" stroke-width="1"/></svg><div class="t" style="left:17.8px;top:444.63px;font-size:8px;color:#d0d0d0;">Kaki_kiri</div><div class="a" style="left:0px;top:455.25px;width:106px;height:13.25px;background:#4e4d50;"></div><div class="a" style="left:0px;top:467.5px;width:106px;height:1px;background:#5c5b5e;"></div><div class="a" style="left:106px;top:455.25px;width:55px;height:13.25px;background:#474649;"></div><div class="a" style="left:106px;top:467.5px;width:55px;height:1px;background:#545356;"></div><div class="a" style="left:161px;top:455.25px;width:28px;height:13.25px;background:#555457;"></div><div class="a" style="left:161px;top:467.5px;width:28px;height:1px;background:#5f5e61;"></div><div class="a" style="left:166.8px;top:460.9px;width:3.2px;height:3.2px;border-radius:50%;background:#0e0e0e"></div><div class="a" style="left:180.8px;top:460.9px;width:3.2px;height:3.2px;border-radius:50%;background:#0e0e0e"></div><svg style="left:5px;top:457.2px" width="10" height="10"><path d="M0.6 0.6 H8.4 V8.8 H2.6 L0.6 6.8 Z" fill="#57504e" stroke="#c8c8c8" stroke-width="1.1"/><path d="M0.6 6.2 H3.2 V8.8" fill="none" stroke="#c8c8c8" stroke-width="1"/></svg><div class="t" style="left:17.8px;top:457.88px;font-size:8px;color:#d0d0d0;">Kaki_Kanan</div><div class="a" style="left:0px;top:468.5px;width:106px;height:28px;background:#4e4d50;"></div><div class="a" style="left:106px;top:468.5px;width:55px;height:28px;background:#4b4a4d;"></div><div class="a" style="left:161px;top:468.5px;width:28px;height:28px;background:#535255;"></div><svg style="left:106px;top:336px" width="56" height="132"><rect x="4" y="2.5" width="3" height="8" fill="#a33fd0"/><rect x="49" y="15.5" width="3.5" height="8.5" fill="#a740d6"/><path d="M49 19.5 C40 19.5 40 32.5 31 32.5" stroke="#37c8c8" stroke-width="1" fill="none"/><rect x="27" y="28.5" width="3.5" height="9" fill="#2ee6ef"/><path d="M27 33 C18 33 14 40 10 46" stroke="#7e9a2a" stroke-width="1" fill="none"/><rect x="3.5" y="42" width="4" height="9" fill="#78a21a"/><path d="M7 46 C13 46 13.5 60 13.5 72 C13.5 100 16 120 27 125" stroke="#8aa82a" stroke-width="1.3" fill="none"/><path d="M8 47 C15 50 14 64 16.5 69 C18.5 72 23 73 27 73" stroke="#8aa82a" stroke-width="1.2" fill="none"/><path d="M13.6 88 C15 100 20 111 27 111" stroke="#8aa82a" stroke-width="1" fill="none"/><path d="M13.6 80 C15 92 20 98 27 98" stroke="#8aa82a" stroke-width="1" fill="none"/><rect x="49" y="55.5" width="4" height="9" fill="#ee5fe8"/><path d="M49 60 C40 60 40 72 31 72.5" stroke="#d08040" stroke-width="1" fill="none"/><rect x="27" y="68.5" width="3.5" height="9" fill="#f08a20"/><rect x="49" y="82" width="3.5" height="8" fill="#1aa5a0"/><path d="M49 86 C40 86 40 98 31 98.5" stroke="#c02828" stroke-width="1" fill="none"/><rect x="27" y="94.5" width="4" height="9" fill="#e41b1b"/><rect x="27" y="108" width="3.5" height="8.5" fill="#ef5f5f"/><rect x="27" y="121" width="3.5" height="9" fill="#2ee8ef"/></svg><div class="a" style="left:190.6px;top:336px;width:509.9px;height:132.5px;background:#68676a;"></div><div class="a" style="left:190.6px;top:336px;width:509.9px;height:13.2px;background:#5d5c5f;"></div><div class="a" style="left:190.6px;top:348.85px;width:509.9px;height:1.1px;background:#2f2e31;"></div><div class="a" style="left:190.6px;top:349.95px;width:509.9px;height:1px;background:#6f6e71;"></div><div class="a" style="left:190.6px;top:362.1px;width:509.9px;height:1.1px;background:#2f2e31;"></div><div class="a" style="left:190.6px;top:363.2px;width:509.9px;height:1px;background:#6f6e71;"></div><div class="a" style="left:190.6px;top:375.35px;width:509.9px;height:1.1px;background:#2f2e31;"></div><div class="a" style="left:190.6px;top:376.45px;width:509.9px;height:1px;background:#6f6e71;"></div><div class="a" style="left:190.6px;top:388.6px;width:509.9px;height:1.1px;background:#2f2e31;"></div><div class="a" style="left:190.6px;top:389.7px;width:509.9px;height:1px;background:#6f6e71;"></div><div class="a" style="left:190.6px;top:401.85px;width:509.9px;height:1.1px;background:#2f2e31;"></div><div class="a" style="left:190.6px;top:402.95px;width:509.9px;height:1px;background:#6f6e71;"></div><div class="a" style="left:190.6px;top:415.1px;width:509.9px;height:1.1px;background:#2f2e31;"></div><div class="a" style="left:190.6px;top:416.2px;width:509.9px;height:1px;background:#6f6e71;"></div><div class="a" style="left:190.6px;top:428.35px;width:509.9px;height:1.1px;background:#2f2e31;"></div><div class="a" style="left:190.6px;top:429.45px;width:509.9px;height:1px;background:#6f6e71;"></div><div class="a" style="left:190.6px;top:441.6px;width:509.9px;height:1.1px;background:#2f2e31;"></div><div class="a" style="left:190.6px;top:442.7px;width:509.9px;height:1px;background:#6f6e71;"></div><div class="a" style="left:190.6px;top:454.85px;width:509.9px;height:1.1px;background:#2f2e31;"></div><div class="a" style="left:190.6px;top:455.95px;width:509.9px;height:1px;background:#6f6e71;"></div><div class="a" style="left:190.6px;top:468.1px;width:509.9px;height:1.1px;background:#2f2e31;"></div><div class="a" style="left:190.6px;top:341.6px;width:509.9px;height:1.2px;background:#d96a45;"></div><div class="a" style="left:224px;top:340.7px;width:24px;height:2.8px;border-radius:1.4px;background:#d98050;opacity:0.85"></div><div class="a" style="left:254px;top:340.7px;width:16px;height:2.8px;border-radius:1.4px;background:#d98050;opacity:0.85"></div><div class="a" style="left:323px;top:340.7px;width:46px;height:2.8px;border-radius:1.4px;background:#d98050;opacity:0.85"></div><div class="a" style="left:400px;top:340.7px;width:41px;height:2.8px;border-radius:1.4px;background:#d98050;opacity:0.85"></div><div class="a" style="left:446px;top:340.7px;width:30px;height:2.8px;border-radius:1.4px;background:#d98050;opacity:0.85"></div><div class="a" style="left:553px;top:340.7px;width:22px;height:2.8px;border-radius:1.4px;background:#d98050;opacity:0.85"></div><div class="a" style="left:597px;top:340.7px;width:22px;height:2.8px;border-radius:1.4px;background:#d98050;opacity:0.85"></div><div class="a" style="left:627px;top:340.7px;width:22px;height:2.8px;border-radius:1.4px;background:#d98050;opacity:0.85"></div><div class="a" style="left:668px;top:340.7px;width:31px;height:2.8px;border-radius:1.4px;background:#d98050;opacity:0.85"></div><div class="a" style="left:191px;top:342.6px;width:4px;height:4px;border-radius:50%;border:1px solid #111"></div><div class="a" style="left:244.6px;top:362.5px;width:455.9px;height:13.25px;background:#4c72ad;"></div><div class="a" style="left:244.6px;top:374.8px;width:455.9px;height:1px;background:#3d5c8e;"></div><div class="a" style="left:700px;top:362.5px;width:1px;height:13.25px;background:#9ab0d0;"></div><div class="a" style="left:191.2px;top:369.9px;width:3.6px;height:3.6px;border-radius:50%;background:#0c0c0c"></div><div class="a" style="left:238.3px;top:368.3px;width:4px;height:6.5px;border:1.1px solid #0c0c0c"></div><div class="a" style="left:244.4px;top:369.9px;width:3.6px;height:3.6px;border-radius:50%;background:#423a86"></div><div class="a" style="left:191.2px;top:383.1px;width:3.6px;height:3.6px;border-radius:50%;background:#0c0c0c"></div><div class="a" style="left:238.3px;top:381.6px;width:4px;height:6.5px;border:1.1px solid #0c0c0c"></div><div class="a" style="left:244.4px;top:383.1px;width:3.6px;height:3.6px;border-radius:50%;background:#5e1c2a"></div><div class="a" style="left:191.2px;top:396.4px;width:3.6px;height:3.6px;border-radius:50%;background:#0c0c0c"></div><div class="a" style="left:238.3px;top:394.8px;width:4px;height:6.5px;border:1.1px solid #0c0c0c"></div><div class="a" style="left:244.4px;top:396.4px;width:3.6px;height:3.6px;border-radius:50%;background:#5e1c2a"></div><div class="a" style="left:191.2px;top:409.6px;width:3.6px;height:3.6px;border-radius:50%;background:#0c0c0c"></div><div class="a" style="left:238.3px;top:408.1px;width:4px;height:6.5px;border:1.1px solid #0c0c0c"></div><div class="a" style="left:244.4px;top:409.6px;width:3.6px;height:3.6px;border-radius:50%;background:#5e1c2a"></div><div class="a" style="left:191.2px;top:422.9px;width:3.6px;height:3.6px;border-radius:50%;background:#0c0c0c"></div><div class="a" style="left:238.3px;top:421.3px;width:4px;height:6.5px;border:1.1px solid #0c0c0c"></div><div class="a" style="left:244.4px;top:422.9px;width:3.6px;height:3.6px;border-radius:50%;background:#5e1c2a"></div><div class="a" style="left:191.2px;top:436.1px;width:3.6px;height:3.6px;border-radius:50%;background:#0c0c0c"></div><div class="a" style="left:238.3px;top:434.6px;width:4px;height:6.5px;border:1.1px solid #0c0c0c"></div><div class="a" style="left:244.4px;top:436.1px;width:3.6px;height:3.6px;border-radius:50%;background:#5e1c2a"></div><div class="a" style="left:191.2px;top:449.4px;width:3.6px;height:3.6px;border-radius:50%;background:#0c0c0c"></div><div class="a" style="left:238.3px;top:447.8px;width:4px;height:6.5px;border:1.1px solid #0c0c0c"></div><div class="a" style="left:244.4px;top:449.4px;width:3.6px;height:3.6px;border-radius:50%;background:#5e1c2a"></div><div class="a" style="left:191.2px;top:462.6px;width:3.6px;height:3.6px;border-radius:50%;background:#0c0c0c"></div><div class="a" style="left:238.3px;top:461.1px;width:4px;height:6.5px;border:1.1px solid #0c0c0c"></div><div class="a" style="left:244.4px;top:462.6px;width:3.6px;height:3.6px;border-radius:50%;background:#5e1c2a"></div><div class="t" style="left:194.8px;top:352.61px;font-size:8.2px;color:#ececec;">Neutral</div><div class="a" style="left:191.2px;top:355.6px;width:4px;height:4px;border-radius:50%;background:#d8141c"></div><div class="a" style="left:190.8px;top:357.7px;width:2.6px;height:2.6px;border-radius:50%;background:#111"></div><div class="a" style="left:231.6px;top:349.25px;width:1px;height:12.2px;background:#424144;"></div><div class="t" style="left:235.8px;top:352.61px;font-size:8.2px;color:#ececec;">Ee</div><div class="a" style="left:226.2px;top:355.2px;width:4px;height:6.5px;border:1.1px solid #0c0c0c"></div><div class="a" style="left:232.2px;top:355.6px;width:4px;height:4px;border-radius:50%;background:#d8141c"></div><div class="a" style="left:231.8px;top:357.7px;width:2.6px;height:2.6px;border-radius:50%;background:#111"></div><div class="a" style="left:272.5px;top:349.25px;width:1px;height:12.2px;background:#424144;"></div><div class="t" style="left:277.8px;top:352.61px;font-size:8.2px;color:#ececec;">D</div><div class="a" style="left:266.2px;top:355.2px;width:4px;height:6.5px;border:1.1px solid #0c0c0c"></div><div class="a" style="left:274.2px;top:355.6px;width:4px;height:4px;border-radius:50%;background:#d8141c"></div><div class="a" style="left:273.8px;top:357.7px;width:2.6px;height:2.6px;border-radius:50%;background:#111"></div><div class="a" style="left:284.7px;top:349.25px;width:1px;height:12.2px;background:#424144;"></div><div class="t" style="left:288.8px;top:352.61px;font-size:8.2px;color:#ececec;">Ee</div><div class="a" style="left:285.2px;top:355.6px;width:4px;height:4px;border-radius:50%;background:#d8141c"></div><div class="a" style="left:284.8px;top:357.7px;width:2.6px;height:2.6px;border-radius:50%;background:#111"></div><div class="t" style="left:300.8px;top:352.61px;font-size:8.2px;color:#ececec;">F</div><div class="a" style="left:297.2px;top:355.6px;width:4px;height:4px;border-radius:50%;background:#d8141c"></div><div class="a" style="left:296.8px;top:357.7px;width:2.6px;height:2.6px;border-radius:50%;background:#111"></div><div class="a" style="left:313px;top:349.25px;width:1px;height:12.2px;background:#424144;"></div><div class="t" style="left:318.8px;top:352.61px;font-size:8.2px;color:#ececec;">Ah</div><div class="a" style="left:308.2px;top:355.2px;width:4px;height:6.5px;border:1.1px solid #0c0c0c"></div><div class="a" style="left:315.2px;top:355.6px;width:4px;height:4px;border-radius:50%;background:#d8141c"></div><div class="a" style="left:314.8px;top:357.7px;width:2.6px;height:2.6px;border-radius:50%;background:#111"></div><div class="a" style="left:378.8px;top:349.25px;width:1px;height:12.2px;background:#424144;"></div><div class="t" style="left:383.8px;top:352.61px;font-size:8.2px;color:#ececec;">G</div><div class="a" style="left:373.0px;top:355.2px;width:4px;height:6.5px;border:1.1px solid #0c0c0c"></div><div class="a" style="left:380.2px;top:355.6px;width:4px;height:4px;border-radius:50%;background:#d8141c"></div><div class="a" style="left:379.8px;top:357.7px;width:2.6px;height:2.6px;border-radius:50%;background:#111"></div><div class="a" style="left:390.3px;top:349.25px;width:1px;height:12.2px;background:#424144;"></div><div class="t" style="left:394.8px;top:352.61px;font-size:8.2px;color:#ececec;">Ee</div><div class="a" style="left:391.2px;top:355.6px;width:4px;height:4px;border-radius:50%;background:#d8141c"></div><div class="a" style="left:390.8px;top:357.7px;width:2.6px;height:2.6px;border-radius:50%;background:#111"></div><div class="a" style="left:443.5px;top:349.25px;width:1px;height:12.2px;background:#424144;"></div><div class="t" style="left:447.8px;top:352.61px;font-size:8.2px;color:#ececec;">Ah</div><div class="a" style="left:438.2px;top:355.2px;width:4px;height:6.5px;border:1.1px solid #0c0c0c"></div><div class="a" style="left:444.2px;top:355.6px;width:4px;height:4px;border-radius:50%;background:#d8141c"></div><div class="a" style="left:443.8px;top:357.7px;width:2.6px;height:2.6px;border-radius:50%;background:#111"></div><div class="a" style="left:479.5px;top:349.25px;width:1px;height:12.2px;background:#424144;"></div><div class="t" style="left:483.8px;top:352.61px;font-size:8.2px;color:#ececec;">S</div><div class="a" style="left:473.9px;top:355.2px;width:4px;height:6.5px;border:1.1px solid #0c0c0c"></div><div class="a" style="left:480.2px;top:355.6px;width:4px;height:4px;border-radius:50%;background:#d8141c"></div><div class="a" style="left:479.8px;top:357.7px;width:2.6px;height:2.6px;border-radius:50%;background:#111"></div><div class="a" style="left:520.8px;top:349.25px;width:1px;height:12.2px;background:#424144;"></div><div class="t" style="left:524.8px;top:352.61px;font-size:8.2px;color:#ececec;">Ah</div><div class="a" style="left:514.7px;top:355.2px;width:4px;height:6.5px;border:1.1px solid #0c0c0c"></div><div class="a" style="left:521.2px;top:355.6px;width:4px;height:4px;border-radius:50%;background:#d8141c"></div><div class="a" style="left:520.8px;top:357.7px;width:2.6px;height:2.6px;border-radius:50%;background:#111"></div><div class="a" style="left:544px;top:349.25px;width:1px;height:12.2px;background:#424144;"></div><div class="a" style="left:538.9000000000001px;top:355.2px;width:4px;height:6.5px;border:1.1px solid #0c0c0c"></div><div class="a" style="left:544.2px;top:355.6px;width:4px;height:4px;border-radius:50%;background:#d8141c"></div><div class="a" style="left:543.8px;top:357.7px;width:2.6px;height:2.6px;border-radius:50%;background:#111"></div><div class="a" style="left:549.7px;top:349.25px;width:1px;height:12.2px;background:#424144;"></div><div class="t" style="left:553.8px;top:352.61px;font-size:8.2px;color:#ececec;">Ah</div><div class="a" style="left:550.2px;top:355.6px;width:4px;height:4px;border-radius:50%;background:#d8141c"></div><div class="a" style="left:549.8px;top:357.7px;width:2.6px;height:2.6px;border-radius:50%;background:#111"></div><div class="a" style="left:573.7px;top:349.25px;width:1px;height:12.2px;background:#424144;"></div><div class="t" style="left:577.8px;top:352.61px;font-size:8.2px;color:#ececec;">M</div><div class="a" style="left:568.2px;top:355.2px;width:4px;height:6.5px;border:1.1px solid #0c0c0c"></div><div class="a" style="left:574.2px;top:355.6px;width:4px;height:4px;border-radius:50%;background:#d8141c"></div><div class="a" style="left:573.8px;top:357.7px;width:2.6px;height:2.6px;border-radius:50%;background:#111"></div><div class="a" style="left:591px;top:349.25px;width:1px;height:12.2px;background:#424144;"></div><div class="t" style="left:595.3px;top:352.61px;font-size:8.2px;color:#ececec;">Γ</div><div class="a" style="left:585.6px;top:355.2px;width:4px;height:6.5px;border:1.1px solid #0c0c0c"></div><div class="a" style="left:591.7px;top:355.6px;width:4px;height:4px;border-radius:50%;background:#d8141c"></div><div class="a" style="left:591.3px;top:357.7px;width:2.6px;height:2.6px;border-radius:50%;background:#111"></div><div class="a" style="left:603px;top:349.25px;width:1px;height:12.2px;background:#424144;"></div><div class="a" style="left:604.0px;top:355.6px;width:4px;height:4px;border-radius:50%;background:#d8141c"></div><div class="a" style="left:603.5999999999999px;top:357.7px;width:2.6px;height:2.6px;border-radius:50%;background:#111"></div><div class="a" style="left:614.4px;top:349.25px;width:1px;height:12.2px;background:#424144;"></div><div class="t" style="left:618.8px;top:352.61px;font-size:8.2px;color:#ececec;">L</div><div class="a" style="left:606.8000000000001px;top:355.2px;width:4px;height:6.5px;border:1.1px solid #0c0c0c"></div><div class="a" style="left:615.2px;top:355.6px;width:4px;height:4px;border-radius:50%;background:#d8141c"></div><div class="a" style="left:614.8px;top:357.7px;width:2.6px;height:2.6px;border-radius:50%;background:#111"></div><div class="a" style="left:632.5px;top:349.25px;width:1px;height:12.2px;background:#424144;"></div><div class="t" style="left:636.8px;top:352.61px;font-size:8.2px;color:#ececec;">Uh</div><div class="a" style="left:627.2px;top:355.2px;width:4px;height:6.5px;border:1.1px solid #0c0c0c"></div><div class="a" style="left:633.2px;top:355.6px;width:4px;height:4px;border-radius:50%;background:#d8141c"></div><div class="a" style="left:632.8px;top:357.7px;width:2.6px;height:2.6px;border-radius:50%;background:#111"></div><div class="a" style="left:656px;top:349.25px;width:1px;height:12.2px;background:#424144;"></div><div class="t" style="left:659.8px;top:352.61px;font-size:8.2px;color:#ececec;">D</div><div class="a" style="left:650.7px;top:355.2px;width:4px;height:6.5px;border:1.1px solid #0c0c0c"></div><div class="a" style="left:656.2px;top:355.6px;width:4px;height:4px;border-radius:50%;background:#d8141c"></div><div class="a" style="left:655.8px;top:357.7px;width:2.6px;height:2.6px;border-radius:50%;background:#111"></div><div class="a" style="left:673.5px;top:349.25px;width:1px;height:12.2px;background:#424144;"></div><div class="t" style="left:677.8px;top:352.61px;font-size:8.2px;color:#ececec;">...</div><div class="a" style="left:667.7px;top:355.2px;width:4px;height:6.5px;border:1.1px solid #0c0c0c"></div><div class="a" style="left:674.2px;top:355.6px;width:4px;height:4px;border-radius:50%;background:#d8141c"></div><div class="a" style="left:673.8px;top:357.7px;width:2.6px;height:2.6px;border-radius:50%;background:#111"></div><div class="a" style="left:692px;top:349.25px;width:1px;height:12.2px;background:#424144;"></div><div class="t" style="left:695.8px;top:352.61px;font-size:8.2px;color:#ececec;">S</div><div class="a" style="left:686.0px;top:355.2px;width:4px;height:6.5px;border:1.1px solid #0c0c0c"></div><div class="a" style="left:692.2px;top:355.6px;width:4px;height:4px;border-radius:50%;background:#d8141c"></div><div class="a" style="left:691.8px;top:357.7px;width:2.6px;height:2.6px;border-radius:50%;background:#111"></div><div class="a" style="left:245.6px;top:312px;width:1.1px;height:184px;background:#a52e3a;"></div><div class="a" style="left:190.6px;top:468.5px;width:509.9px;height:28px;background:#545356;"></div><div class="a" style="left:712px;top:0px;width:26px;height:496px;background:#535255;"></div><div class="a" style="left:738px;top:0px;width:4px;height:496px;background:#434245;"></div><div class="a" style="left:711px;top:0px;width:1px;height:496px;background:#3f3e41;"></div><div class="a" style="left:714px;top:44.5px;width:24px;height:1px;background:#464548;"></div><div class="a" style="left:714px;top:115px;width:24px;height:1px;background:#464548;"></div><div class="a" style="left:714px;top:177px;width:24px;height:1px;background:#464548;"></div><div class="a" style="left:714px;top:210px;width:24px;height:1px;background:#464548;"></div><svg style="left:716px;top:0px" width="22" height="210"><path d="M3.5 11 C3.5 7 7.5 5.5 11 5.8 C15 6.1 17.5 8.5 17.3 11 C17 13 14.5 12.6 13.8 13.6 C13 14.8 13.5 16 10.5 16.2 C6 16.4 3.5 14 3.5 11 Z" fill="#d6d6d6"/><circle cx="7.3" cy="10.3" r="1.1" fill="#535255"/><circle cx="10.5" cy="8.3" r="1.1" fill="#535255"/><circle cx="14" cy="9" r="1.1" fill="#535255"/><circle cx="8.3" cy="13.5" r="1.1" fill="#535255"/><rect x="4" y="27" width="12.5" height="9" fill="#cfcfcf"/><path d="M4 31.5 H16.5 M8.2 27 V36 M12.3 27 V36" stroke="#535255" stroke-width="0.9"/><rect x="4.5" y="55" width="1.5" height="14" fill="#d0d0d0"/><rect x="6.5" y="57" width="6" height="4" fill="#d0d0d0"/><rect x="6.5" y="63" width="9.5" height="4" fill="#d0d0d0"/><circle cx="10" cy="82" r="6" fill="#d6d6d6"/><rect x="9.1" y="80.5" width="1.8" height="4.8" fill="#535255"/><rect x="9.1" y="78" width="1.8" height="1.7" fill="#535255"/><rect x="5.5" y="97.5" width="10" height="10" fill="none" stroke="#d0d0d0" stroke-width="0.9" stroke-dasharray="1.6 1.2"/><rect x="4" y="96" width="2.8" height="2.8" fill="#d0d0d0"/><rect x="14.2" y="96" width="2.8" height="2.8" fill="#d0d0d0"/><rect x="4" y="106.2" width="2.8" height="2.8" fill="#d0d0d0"/><rect x="14.2" y="106.2" width="2.8" height="2.8" fill="#d0d0d0"/><rect x="9.7" y="101.7" width="1.6" height="1.6" fill="#d0d0d0"/><circle cx="5.5" cy="137" r="2.6" fill="#d4d4d4"/><circle cx="10.5" cy="132.5" r="2.1" fill="#d4d4d4"/><circle cx="14.5" cy="128" r="1.6" fill="#d4d4d4"/><path d="M3 166 C3 161 6.5 159 9 159.5 C10.5 157 15 157 17 160 C19.5 160.5 20 163 19.5 165.5 C19 168 17 169 15 169 H7 C4.5 169 3 168 3 166 Z" fill="none" stroke="#d0d0d0" stroke-width="1.4"/><path d="M7 165.5 C8 162 11 162 12 164 C13 166 16 166 16.5 163.5" fill="none" stroke="#d0d0d0" stroke-width="1.2"/><path d="M4 187.5 V201 H17" stroke="#d0d0d0" stroke-width="1.5" fill="none"/><path d="M6 199 L9.5 194 L12 196.5 L15.5 192 M13 192 H15.5 V194.5" stroke="#d0d0d0" stroke-width="1.3" fill="none"/></svg><div class="a" style="left:742px;top:0px;width:220.5px;height:5.6px;background:#444346;"></div><div class="a" style="left:742px;top:0px;width:45px;height:5.6px;background:#535255;"></div><div class="t" style="left:746px;top:-4.28px;font-size:8.3px;color:#ececec;letter-spacing:-0.1px">Properties</div><div class="t" style="left:793px;top:-4.28px;font-size:8.3px;color:#a8a8a8;">Library</div><svg style="left:950px;top:0px" width="10" height="5"><path d="M1 1 H9 M1 3.5 H9" stroke="#bdbdbd" stroke-width="1"/></svg><div class="a" style="left:962.5px;top:0px;width:2.6px;height:496px;background:#3f3e41;"></div><svg style="left:758px;top:20px" width="20" height="18"><path d="M4.7 11.6 L12 4.8" stroke="#d6d6d6" stroke-width="1.4" fill="none"/><path d="M9.5 7.5 L15.5 7 L16 13.5 L10 13.8 Z" fill="#d0d0d0"/><circle cx="10" cy="12.5" r="2.6" fill="#535255" stroke="#d6d6d6" stroke-width="1.1"/></svg><div class="a" style="left:795px;top:34px;width:145px;height:13.3px;background:#48474a;border-top:1px solid #5a595c"></div><div class="t" style="left:801px;top:37.09px;font-size:8.4px;color:#e4e4e4;">Graphic</div><svg style="left:929px;top:37px" width="10" height="8"><path d="M2 3 L4.5 5.5 L7 3" stroke="#cfcfcf" stroke-width="1" fill="none"/></svg><div class="a" style="left:752px;top:54px;width:198px;height:1px;background:#4d4c4f;"></div><div class="t" style="left:747px;top:62.09px;font-size:8.4px;color:#c2c2c2;">Instance of:</div><div class="a" style="left:795px;top:57px;width:99px;height:13.8px;border:1px solid #6a696c;background:#525154"></div><div class="t" style="left:801px;top:59.69px;font-size:8.4px;color:#e8e8e8;">kepala</div><div class="a" style="left:898px;top:57px;width:43px;height:13.8px;border:1px solid #6a696c;border-radius:1px"></div><div class="t" style="left:904px;top:59.69px;font-size:8.4px;color:#e2e2e2;">Swap...</div><div class="a" style="left:742px;top:94.5px;width:220.5px;height:1.5px;background:#444346;"></div><svg style="left:745.5px;top:101px" width="9" height="7"><path d="M0 0.3 H7.2 L3.6 5 Z" fill="#d4d4d4"/></svg><div class="t" style="left:756px;top:98.29px;font-size:8.4px;color:#c8c8c8;">Position and Size</div><div class="t" style="left:784px;top:118.49px;font-size:8.4px;color:#a6a6a6;">X:</div><div class="t" style="left:797px;top:118.49px;font-size:8.4px;color:#e6e6e6;transform:scaleX(0.92);transform-origin:0 0">-32,40</div><div class="a" style="left:797px;top:127.6px;width:24px;height:1px;background:repeating-linear-gradient(90deg,#a8a8a8 0 1px,transparent 1px 2px)"></div><div class="t" style="left:871px;top:118.49px;font-size:8.4px;color:#a6a6a6;">Y:</div><div class="t" style="left:884px;top:118.49px;font-size:8.4px;color:#e6e6e6;transform:scaleX(0.92);transform-origin:0 0">-106,75</div><div class="a" style="left:884px;top:127.6px;width:28px;height:1px;background:repeating-linear-gradient(90deg,#a8a8a8 0 1px,transparent 1px 2px)"></div><div class="a" style="left:742px;top:133px;width:220.5px;height:1px;background:#4b4a4d;"></div><svg style="left:743px;top:142px" width="14" height="10"><path d="M5.5 2.3 H4 C1.6 2.3 1.6 7.3 4 7.3 H5.5 M8.5 2.3 H10 C12.4 2.3 12.4 7.3 10 7.3 H8.5" stroke="#d0d0d0" stroke-width="1.3" fill="none"/><path d="M4.5 4.8 H9.5" stroke="#d0d0d0" stroke-width="1"/></svg><div class="t" style="left:782px;top:140.69px;font-size:8.4px;color:#a6a6a6;">W:</div><div class="t" style="left:797px;top:140.69px;font-size:8.4px;color:#e6e6e6;transform:scaleX(0.92);transform-origin:0 0">138,15</div><div class="a" style="left:797px;top:149.8px;width:24px;height:1px;background:repeating-linear-gradient(90deg,#a8a8a8 0 1px,transparent 1px 2px)"></div><div class="t" style="left:869.5px;top:140.69px;font-size:8.4px;color:#a6a6a6;">H:</div><div class="t" style="left:884px;top:140.69px;font-size:8.4px;color:#e6e6e6;transform:scaleX(0.92);transform-origin:0 0">113,65</div><div class="a" style="left:884px;top:149.8px;width:24px;height:1px;background:repeating-linear-gradient(90deg,#a8a8a8 0 1px,transparent 1px 2px)"></div><div class="a" style="left:742px;top:159.5px;width:220.5px;height:1.5px;background:#444346;"></div><svg style="left:745.5px;top:165px" width="9" height="7"><path d="M0 0.3 H7.2 L3.6 5 Z" fill="#d4d4d4"/></svg><div class="t" style="left:756px;top:162.29px;font-size:8.4px;color:#c8c8c8;">Color Effect</div><div class="t" style="left:770px;top:181.49px;font-size:8.4px;color:#b2b2b2;">Style:</div><div class="a" style="left:796px;top:180px;width:102px;height:12.4px;background:#48474a;border-top:1px solid #5a595c"></div><div class="t" style="left:801px;top:181.49px;font-size:8.4px;color:#e8e8e8;">None</div><svg style="left:887px;top:183px" width="10" height="8"><path d="M2 3 L4.5 5.5 L7 3" stroke="#cfcfcf" stroke-width="1" fill="none"/></svg><div class="a" style="left:742px;top:202px;width:220.5px;height:1.5px;background:#444346;"></div><svg style="left:745.5px;top:209px" width="9" height="7"><path d="M0 0.3 H7.2 L3.6 5 Z" fill="#d4d4d4"/></svg><div class="t" style="left:756px;top:205.09px;font-size:8.4px;color:#c8c8c8;">Looping</div><div class="t" style="left:757px;top:224.09px;font-size:8.4px;color:#b2b2b2;">Options:</div><div class="a" style="left:800px;top:223px;width:136.5px;height:12.4px;background:#48474a;border-top:1px solid #5a595c"></div><div class="t" style="left:805px;top:224.09px;font-size:8.4px;color:#e8e8e8;">Loop</div><svg style="left:926px;top:226px" width="10" height="8"><path d="M2 3 L4.5 5.5 L7 3" stroke="#cfcfcf" stroke-width="1" fill="none"/></svg><div class="t" style="left:770px;top:244.09px;font-size:8.4px;color:#b2b2b2;">First:</div><div class="t" style="left:798.5px;top:244.09px;font-size:8.4px;color:#e6e6e6;">1</div><div class="a" style="left:798px;top:254px;width:5px;height:1px;background:repeating-linear-gradient(90deg,#a8a8a8 0 1px,transparent 1px 2px)"></div><div class="a" style="left:799.3px;top:263.4px;width:139px;height:13.2px;border:1px solid #727174;border-radius:1.5px"></div><div class="t" style="left:832.8px;top:264.99px;font-size:8.1px;color:#e6e6e6;">Use Frame Picker...</div><div class="a" style="left:799.3px;top:284.2px;width:139px;height:13.2px;border:1px solid #727174;border-radius:1.5px"></div><div class="t" style="left:843.4px;top:286.19px;font-size:8.1px;color:#e6e6e6;">Lip Syncing...</div><div class="a" style="left:965px;top:0px;width:19px;height:496px;background:#535255;"></div><div class="a" style="left:965px;top:0px;width:19px;height:5.6px;background:#444346;"></div><svg style="left:975px;top:0px" width="9" height="5"><path d="M1 1 H9 M1 3.5 H9" stroke="#bdbdbd" stroke-width="1"/></svg><div class="a" style="left:967.5px;top:51px;width:16.5px;height:17px;background:#2e2d30;"></div><div class="a" style="left:965px;top:111px;width:19px;height:1px;background:#444346;"></div><div class="a" style="left:965px;top:448px;width:19px;height:1px;background:#444346;"></div><svg style="left:964px;top:0px" width="20" height="496"><path d="M10 12.5 L19.5 18.5 L14.5 19.5 L10 25 Z" fill="none" stroke="#cfcfcf" stroke-width="1.1"/><path d="M10.5 34 L20 40.5 L15 41.5 L10.5 46.5 Z" fill="#d4d4d4"/><path d="M9.5 52.5 L16 58 L12.5 59 L9.5 63.5 Z" fill="#d4d4d4"/><path d="M12.5 54.5 H20 M13 62.5 H20" stroke="#d4d4d4" stroke-width="1" stroke-dasharray="1.5 1"/><ellipse cx="16.5" cy="79.5" rx="6" ry="3" fill="none" stroke="#cfcfcf" stroke-width="1.1"/><path d="M16.5 73 C12.5 75 11.5 84 16.5 86 C20 84 21 76 16.5 73" stroke="#cfcfcf" stroke-width="1.1" fill="none"/><ellipse cx="17.5" cy="98.5" rx="7" ry="4" fill="none" stroke="#cfcfcf" stroke-width="1.2"/><path d="M12.5 101.5 C10.5 104 12 106.5 14.5 105.5" stroke="#cfcfcf" stroke-width="1.2" fill="none"/><path d="M11 131 L12.5 125 L18.5 118.5 L21.5 121.5 L15.5 128 Z" fill="#d4d4d4"/><path d="M11 131 L14.5 127.5" stroke="#535255" stroke-width="0.8"/><path d="M11.5 139 H21.5 M16.5 139 V151" stroke="#d8d8d8" stroke-width="1.8" fill="none"/><path d="M10.5 171.5 L21.5 160" stroke="#d4d4d4" stroke-width="1.2"/><rect x="10.5" y="182.5" width="12" height="9" fill="#8a898c" stroke="#cfcfcf" stroke-width="1"/><ellipse cx="17.5" cy="207.5" rx="6.5" ry="4.5" fill="#8a898c" stroke="#cfcfcf" stroke-width="1"/><path d="M13.5 222.5 H20.5 L23.5 228.5 L20.5 234.5 H13.5 L10.5 228.5 Z" fill="#8a898c" stroke="#cfcfcf" stroke-width="1"/><path d="M10.5 255.5 L11.5 251.5 L19.5 243.5 L22.5 246.5 L14.5 254.5 Z" fill="#d4d4d4"/><path d="M10.5 276.5 C10.5 272.5 12.5 270.5 14.5 271.5 L21.5 263.5 L22.5 264.5 L15.5 272.5 C15.5 275.5 13.5 276.5 10.5 276.5 Z" fill="#d4d4d4"/><path d="M11.5 268.5 C11.5 265.5 14.5 263.5 16.5 264.5" stroke="#d4d4d4" stroke-width="1" fill="none"/><path d="M10.5 297.5 C10.5 293.5 12.5 291.5 14.5 292.5 L21.5 284.5 L22.5 285.5 L15.5 293.5 C15.5 296.5 13.5 297.5 10.5 297.5 Z" fill="#d4d4d4"/><path d="M11.5 320 L20 309.5 M10 318 L12.5 322 M19 308 L22.5 311" stroke="#d4d4d4" stroke-width="2" fill="none"/><path d="M10.5 332.5 L15.5 328.5 L21.5 334.5 L16.5 339.5 Z" fill="#d4d4d4"/><path d="M20.5 336.5 C22.5 338.5 22.5 340.5 20.5 340.5" stroke="#d4d4d4" stroke-width="1.2" fill="none"/><path d="M10.5 352.5 L14.5 349.5 L19.5 354.5 L15.5 358.5 Z" fill="#d4d4d4"/><path d="M17.5 352.5 H22.5 V359.5 H17.5" stroke="#d4d4d4" stroke-width="1" fill="none"/><path d="M10.5 383.5 L11.5 380.5 L18.5 372.5 L20.5 374.5 L13.5 382.5 Z" fill="none" stroke="#d4d4d4" stroke-width="1.1"/><path d="M18.5 369.5 L23.5 374.5 L21.5 376.5 L16.5 371.5 Z" fill="#d4d4d4"/><path d="M10.5 398.5 L17.5 390.5 L22.5 395.5 L15.5 402.5 H12.5 Z" fill="#d4d4d4"/><path d="M12.5 400.5 L14.5 402.5" stroke="#535255" stroke-width="1"/><path d="M10.5 421.5 C13.5 414.5 15.5 420.5 18.5 413.5 M12.5 417.5 L20.5 420.5" stroke="#d4d4d4" stroke-width="1.5" fill="none"/><path d="M10.5 443.5 L14.5 438.5 M13.5 433.5 L19.5 439.5 L16.5 440.5 L14.5 438.5 L12.5 435.5 Z M16.5 432.5 L22.5 436.5 L19.5 439.5" stroke="#d4d4d4" stroke-width="1.2" fill="#d4d4d4"/><rect x="10.5" y="456.5" width="7" height="7" fill="#6a696c"/><path d="M17.5 460 L21.5 457.5 V462.5 Z" fill="#6a696c"/><g transform="translate(16.5 481) scale(0.78) translate(-16.5 -481)"><path d="M11.5 482.5 C11.5 478.5 12.5 477.5 13.5 478.5 V474.5 C13.5 472.5 15.5 472.5 15.5 474.5 V473.5 C15.5 471.5 17.5 471.5 17.5 473.5 V474.5 C17.5 472.5 19.5 472.5 19.5 474.5 V476.5 C19.5 474.5 21.5 474.5 21.5 476.5 V483.5 C21.5 487.5 19.5 489.5 16.5 489.5 C13.5 489.5 12.5 487.5 11.5 485.5 Z" fill="#d8d8d8"/></g></svg></body></html>
